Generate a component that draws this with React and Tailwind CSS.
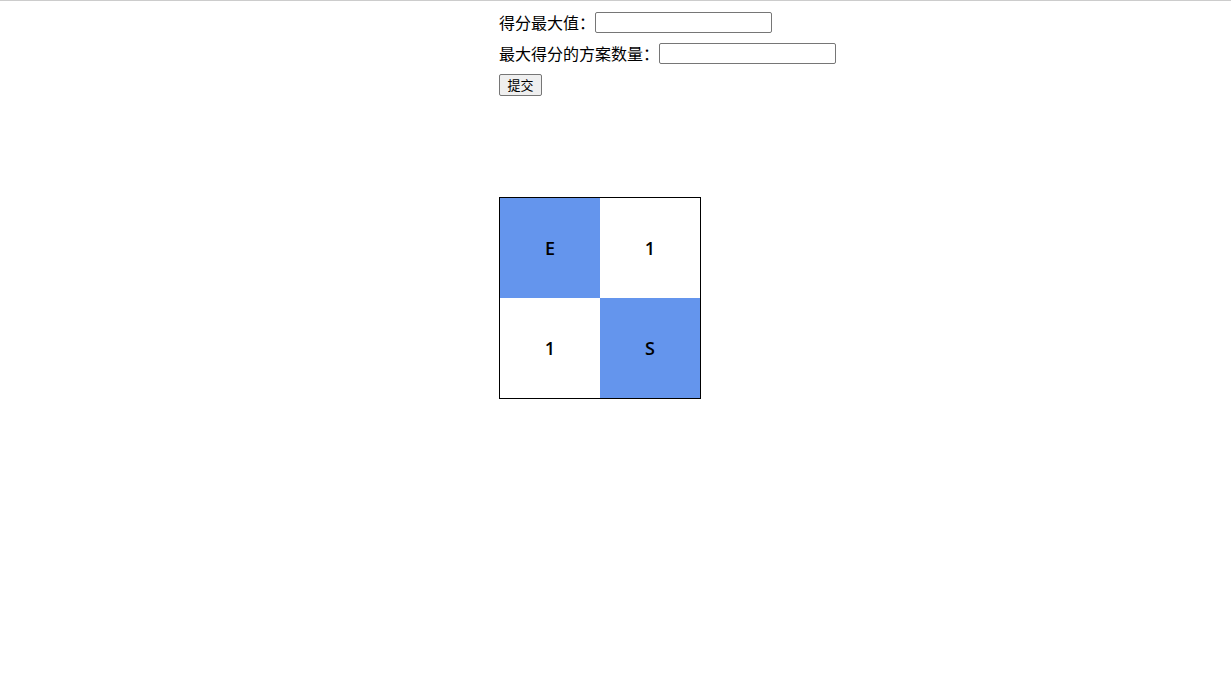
export default function App() {
  const cells = [
    { label: 'E', blue: true },
    { label: '1', blue: false },
    { label: '1', blue: false },
    { label: 'S', blue: true },
  ];

  return (
    <div className="min-h-[681px] bg-white border-t border-[#cccccc] font-['Microsoft_YaHei','Noto_Sans_CJK_SC',sans-serif] text-[16px] text-black">
      <div className="ml-[499px] pt-[9px]">
        <div className="flex items-center h-[25px]">
          <span className="leading-[25px]">得分最大值：</span>
          <input className="w-[177px] h-[21px] border border-[#767676] rounded-[2px] px-1 text-[13px] outline-none" />
        </div>
        <div className="flex items-center h-[25px] mt-[6px]">
          <span className="leading-[25px]">最大得分的方案数量：</span>
          <input className="w-[177px] h-[21px] border border-[#767676] rounded-[2px] px-1 text-[13px] outline-none" />
        </div>
        <div className="mt-[5px] h-[22px]">
          <button className="w-[43px] h-[22px] bg-[#efefef] border border-[#767676] rounded-[2px] text-[13px] leading-none">
            提交
          </button>
        </div>

        <div className="mt-[104px] w-[202px] border border-black grid grid-cols-2 font-['Open_Sans',sans-serif] font-semibold text-[18px]">
          {cells.map((c, i) => (
            <div
              key={i}
              className={`h-[100px] flex items-center justify-center ${c.blue ? 'bg-[#6495ed]' : 'bg-white'}`}
            >
              {c.label}
            </div>
          ))}
        </div>
      </div>
    </div>
  );
}
